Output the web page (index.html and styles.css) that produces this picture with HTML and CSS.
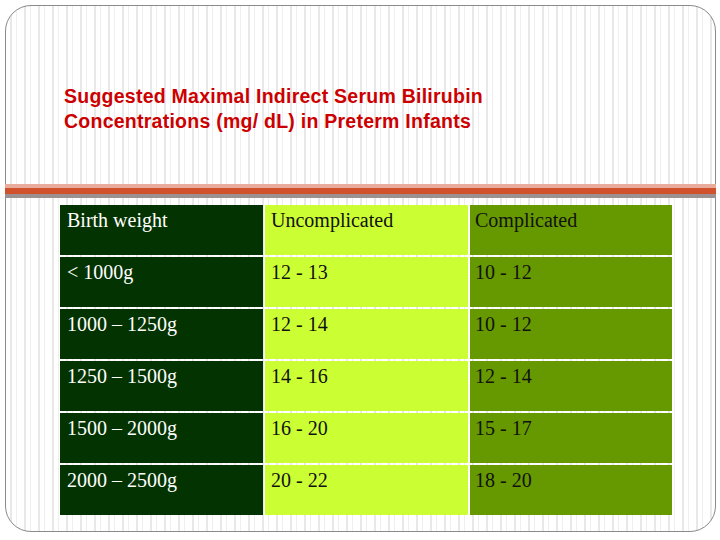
FILE: index.html
```html
<!DOCTYPE html>
<html>
<head>
<meta charset="utf-8">
<link rel="stylesheet" href="styles.css">
</head>
<body>
<div class="frame">
  <h1 class="title">Suggested Maximal Indirect Serum Bilirubin<br>Concentrations (mg/ dL) in Preterm Infants</h1>
  <div class="bar"><div class="bar-pink"></div><div class="bar-orange"></div><div class="bar-gray"></div></div>
  <div class="grid">
    <div class="cell c1">Birth weight</div><div class="cell c2">Uncomplicated</div><div class="cell c3">Complicated</div>
    <div class="cell c1">&lt; 1000g</div><div class="cell c2">12 - 13</div><div class="cell c3">10 - 12</div>
    <div class="cell c1">1000 – 1250g</div><div class="cell c2">12 - 14</div><div class="cell c3">10 - 12</div>
    <div class="cell c1">1250 – 1500g</div><div class="cell c2">14 - 16</div><div class="cell c3">12 - 14</div>
    <div class="cell c1">1500 – 2000g</div><div class="cell c2">16 - 20</div><div class="cell c3">15 - 17</div>
    <div class="cell c1">2000 – 2500g</div><div class="cell c2">20 - 22</div><div class="cell c3">18 - 20</div>
  </div>
</div>
</body>
</html>
```
FILE: styles.css
```css
html, body {
  margin: 0;
  padding: 0;
  background: #ffffff;
}
body {
  width: 720px;
  height: 540px;
  overflow: hidden;
}
.frame {
  margin: 5px 0 0 5px;
  width: 709px;
  height: 525px;
  border: 1px solid #8a8a8a;
  border-radius: 26px;
  background-color: #ffffff;
  background-image:
    repeating-linear-gradient(to right,
      transparent 0, transparent 4px,
      #e8e8e8 4px, #e8e8e8 6px,
      transparent 6px, transparent 10px,
      #eeeeee 10px, #eeeeee 11px,
      transparent 11px, transparent 14px);
  box-sizing: content-box;
}
.title {
  margin: 0;
  padding: 78px 0 0 58px;
  font-family: "Liberation Sans", Arial, sans-serif;
  font-weight: bold;
  font-size: 19.5px;
  line-height: 25px;
  letter-spacing: 0.25px;
  color: #cc0000;
}
.bar {
  margin: 50px -1px 0 -1px;
  display: flex;
  flex-direction: column;
}
.bar-pink { height: 4px; background: #e9ab9c; }
.bar-orange { height: 6px; background: #d0512b; }
.bar-gray { height: 4px; background: #9b9191; }
.grid {
  margin: 7px 0 0 54px;
  width: 612px;
  display: grid;
  grid-template-columns: 203px 203px 202px;
  grid-auto-rows: 50px;
  gap: 2px;
}
.cell {
  box-sizing: border-box;
  padding: 4px 0 0 7px;
  font-family: "Liberation Serif", "Times New Roman", serif;
  font-size: 20px;
  line-height: 23px;
}
.c1 { background: #033300; color: #ffffff; }
.c2 { background: #ccff33; color: #111111; padding-left: 6px; }
.c3 { background: #669900; color: #111111; padding-left: 5px; }
```
